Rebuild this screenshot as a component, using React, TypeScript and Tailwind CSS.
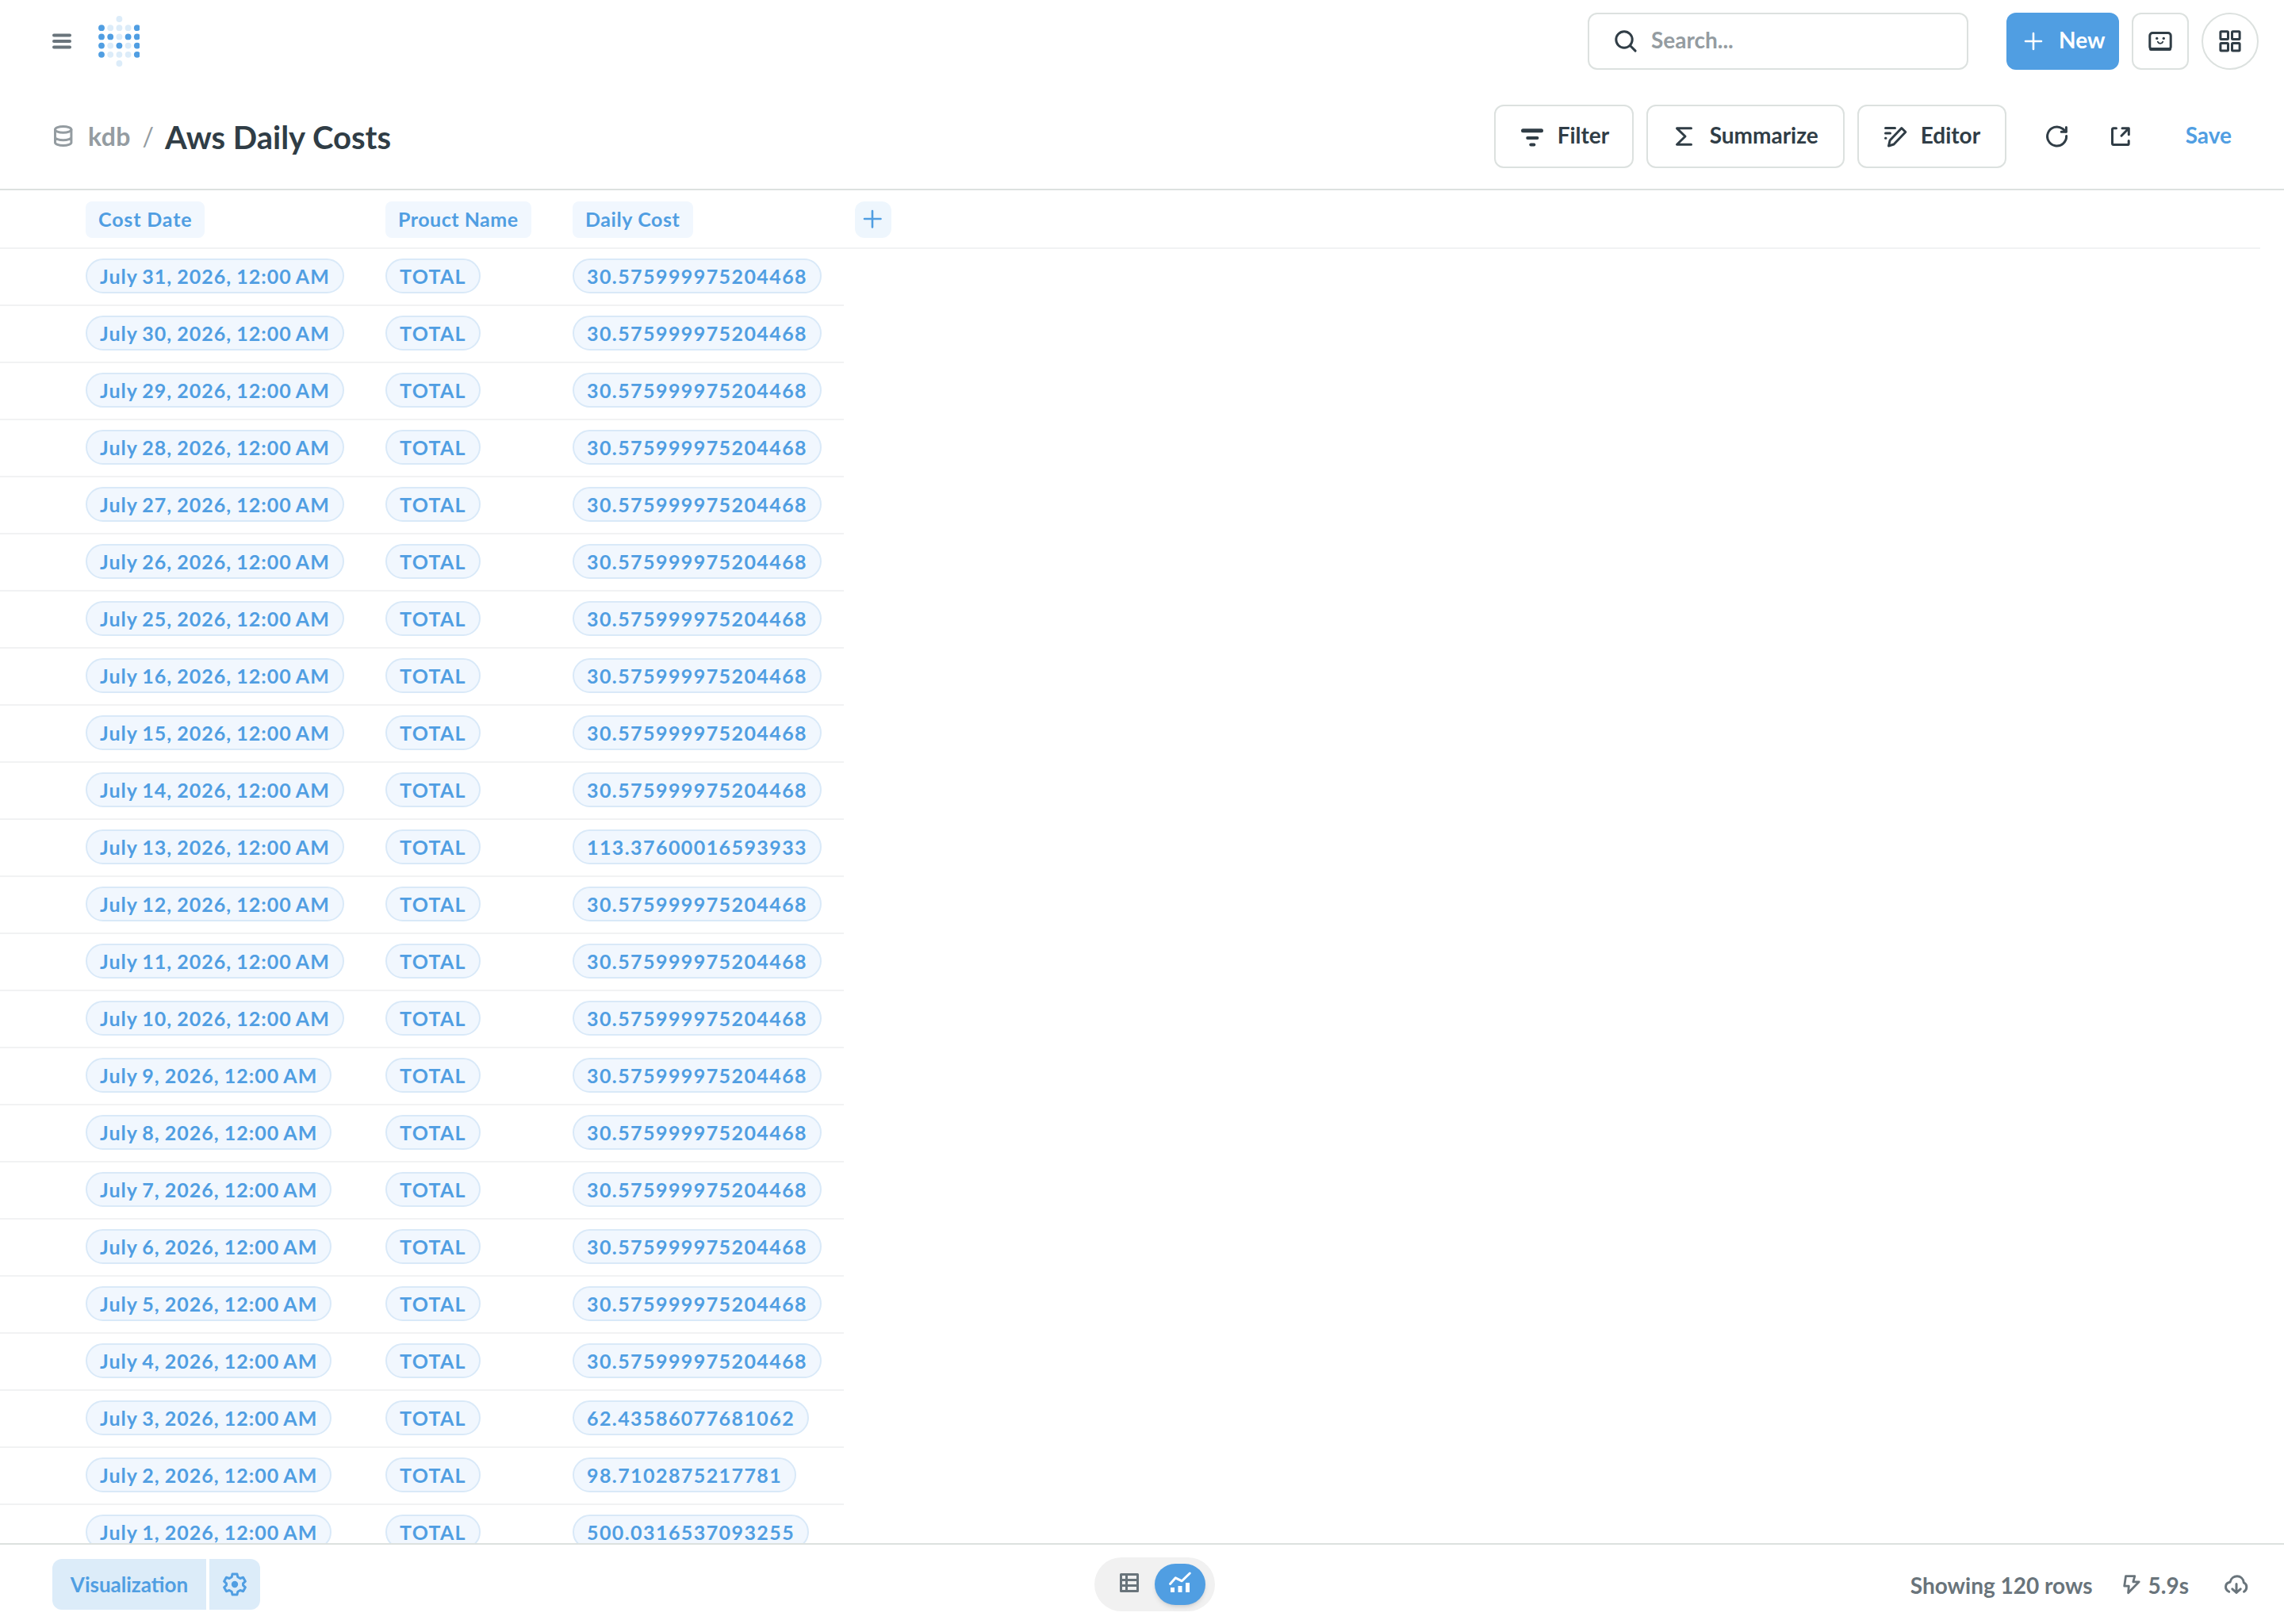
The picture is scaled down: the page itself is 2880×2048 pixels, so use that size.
import React from 'react';

interface CostRow {
  date: string;
  product: string;
  cost: string;
}

const USUAL_COST = '30.575999975204468';

// Days whose cost differs from the usual one
const COST_BY_DAY: Record<number, string> = {
  13: '113.37600016593933',
  3: '62.43586077681062',
  2: '98.7102875217781',
  1: '500.0316537093255',
};

const DAYS = [31, 30, 29, 28, 27, 26, 25, 16, 15, 14, 13, 12, 11, 10, 9, 8, 7, 6, 5, 4, 3, 2, 1];

const ROWS: CostRow[] = DAYS.map(day => ({
  date: `July ${day}, 2026, 12:00 AM`,
  product: 'TOTAL',
  cost: COST_BY_DAY[day] ?? USUAL_COST,
}));

const LOGO_ROWS = ['..o..', 'xooox', 'xxoxx', 'xoxox', 'xooox', '..o..'];

const Logo: React.FC = () => (
  <svg className="h-[68px] w-[52px]" viewBox="0 0 52 68">
    {LOGO_ROWS.map((row, y) =>
      row.split('').map((dot, x) =>
        dot === '.' ? null : (
          <circle
            key={`${x}-${y}`}
            cx={4 + x * 11.2}
            cy={6 + y * 11.2}
            r={3.9}
            fill={dot === 'x' ? '#509ee2' : '#dcecf9'}
          />
        )
      )
    )}
  </svg>
);

interface IconProps {
  className?: string;
  children: React.ReactNode;
}

const Icon: React.FC<IconProps> = ({ className = '', children }) => (
  <svg
    className={`size-8 shrink-0 ${className}`}
    viewBox="0 0 32 32"
    fill="none"
    stroke="currentColor"
    strokeWidth={3}
    strokeLinecap="round"
    strokeLinejoin="round"
  >
    {children}
  </svg>
);

const TopBar: React.FC = () => (
  <nav className="flex h-[104px] items-center pr-8 pl-[62px]">
    <Icon className="text-[#69747b]">
      <path d="M6 8.5h20M6 16h20M6 23.5h20" strokeWidth={4} />
    </Icon>
    <div className="ml-[30px]">
      <Logo />
    </div>
    <div className="ml-auto flex h-[72px] w-[480px] items-center rounded-xl border-2 border-[#dce1df] pl-[30px]">
      <Icon>
        <circle cx="14" cy="14" r="10.2" />
        <path d="m21.5 21.5 6.6 6.6" />
      </Icon>
      <span className="ml-4 pb-[5px] text-[28px] text-[#949ca1]">Search...</span>
    </div>
    <button className="ml-12 flex h-[72px] w-[142px] items-center rounded-xl bg-[#509ee2] pl-[18px] text-[28px] text-white">
      <Icon>
        <path d="M16 6v20M6 16h20" strokeWidth={2.6} />
      </Icon>
      <span className="ml-4 pb-[5px]">New</span>
    </button>
    <button className="ml-4 flex size-[72px] items-center justify-center rounded-xl border-2 border-[#dce1df]">
      <Icon>
        <rect x="2.8" y="5.5" width="26.4" height="21" rx="3.5" />
        <path d="M4 26h24" strokeWidth={4} />
        <circle cx="11.7" cy="12.4" r="1.7" fill="currentColor" stroke="none" />
        <circle cx="20.3" cy="12.4" r="1.7" fill="currentColor" stroke="none" />
        <path d="M12.8 16.6c1.2 2.9 5.2 2.9 6.4 0" strokeWidth={1.8} />
      </Icon>
    </button>
    <button className="ml-4 flex size-[72px] items-center justify-center rounded-full border-2 border-[#dce1df]">
      <Icon>
        <rect x="3.9" y="3.8" width="9.6" height="9.6" rx="1" />
        <rect x="18.5" y="3.8" width="9.6" height="9.6" rx="1" />
        <rect x="3.9" y="18.4" width="9.6" height="9.6" rx="1" />
        <rect x="18.5" y="18.4" width="9.6" height="9.6" rx="1" />
      </Icon>
    </button>
  </nav>
);

const actionClass = 'flex h-20 items-center rounded-xl border-2 border-[#dce1df] pl-[30px]';

const QuestionHeader: React.FC = () => (
  <header className="flex h-[136px] items-center border-b-2 border-[#dce1df] pt-0.5 pr-[66px] pl-16 text-[28px]">
    <Icon className="text-[#949ca1]">
      <ellipse cx="15.7" cy="7.3" rx="10.2" ry="3.9" />
      <path d="M5.5 7.5v16.3c0 2 4.6 3.8 10.2 3.8s10.2-1.8 10.2-3.8V7.5M5.5 17c0 2 4.6 3.8 10.2 3.8S25.9 19 25.9 17" />
    </Icon>
    <span className="ml-[15px] text-[32px] tracking-[0.3px] text-[#949ca1]">kdb</span>
    <span className="ml-[15px] text-[32px] font-normal text-[#949ca1]">/</span>
    <h1 className="ml-3.5 pt-0.5 text-[40px]">Aws Daily Costs</h1>
    <div className="ml-auto flex items-center gap-4">
      <button className={`${actionClass} w-44`}>
        <Icon>
          <path d="M4.5 8.8h23" strokeWidth={5} />
          <path d="M10.2 18h12.2" strokeWidth={4} />
          <path d="M14.3 26.5h4" strokeWidth={4} />
        </Icon>
        <span className="ml-4 pb-[5px]">Filter</span>
      </button>
      <button className={`${actionClass} w-[250px]`}>
        <Icon>
          <path d="M24.5 5.8H6.5L17 16 6.5 26.3h18" />
        </Icon>
        <span className="ml-4 pb-[5px]">Summarize</span>
      </button>
      <button className={`${actionClass} w-[188px]`}>
        <Icon>
          <path d="M3.5 5.5h12M3.5 12h6M3.5 18.2h.5" />
          <path d="m23.8 5.5 5 5L14 26l-6.5 2 1.6-7z" />
        </Icon>
        <span className="ml-4 pb-[5px]">Editor</span>
      </button>
    </div>
    <Icon className="ml-12">
      <path d="M27.6 15.5A12 12 0 1 1 22.6 6.2L27 10" />
      <path d="M27.4 4.5v5.7h-6.2" />
    </Icon>
    <Icon className="ml-12">
      <path d="M10.5 5.8H6.8a1.3 1.3 0 0 0-1.3 1.3v18.1a1.3 1.3 0 0 0 1.3 1.3h18.1a1.3 1.3 0 0 0 1.3-1.3V21.5" />
      <path d="M18 5.8h8.3v8M26 6 17 15.2" />
    </Icon>
    <button className="ml-[66px] pb-[5px] text-[#509ee2]">Save</button>
  </header>
);

const columnClass = ['w-[378px]', 'w-[236px]', 'w-[358px]'];
const titleClass = ['tracking-[0.85px]', 'tracking-[0.5px]', 'tracking-[0.6px]'];
const valueClass = ['tracking-[1px] [word-spacing:-1px]', 'tracking-[1.25px]', 'tracking-[1.42px]'];

const ResultsTable: React.FC = () => (
  <main className="min-h-0 flex-1 overflow-hidden text-[25px] text-[#509ee2]">
    <div className="mr-[30px] flex h-[74px] items-center border-b-2 border-[#f1f2f3] pt-0.5 pl-[92px]">
      {['Cost Date', 'Prouct Name', 'Daily Cost'].map((title, index) => (
        <div key={title} className={`flex pl-4 ${columnClass[index]}`}>
          <span className={`flex h-[46px] items-center rounded-lg bg-[#f1f7fe] px-4 ${titleClass[index]}`}>
            {title}
          </span>
        </div>
      ))}
      <button className="ml-3.5 flex h-[46px] w-[46px] items-center justify-center rounded-xl bg-[#eef6fd]">
        <Icon>
          <path d="M15 5v20.5M5 15h20.5" strokeWidth={2.6} />
        </Icon>
      </button>
    </div>
    {ROWS.map(row => (
      <div key={row.date} className="flex h-[72px] w-[1064px] items-start border-b-2 border-[#f1f2f3] pt-3 pl-[92px]">
        {[row.date, row.product, row.cost].map((value, index) => (
          <div key={index} className={`flex pl-4 ${columnClass[index]}`}>
            <span
              className={`flex h-11 items-center rounded-full border-2 border-[#d9e9f8] bg-[#f1f7fe] px-4 pt-0.5 whitespace-nowrap ${valueClass[index]}`}
            >
              {value}
            </span>
          </div>
        ))}
      </div>
    ))}
  </main>
);

const Footer: React.FC = () => (
  <footer className="flex h-[102px] items-center justify-between border-t-2 border-[#dce1df] pr-11 pl-[66px] text-[28px] text-[#69747b]">
    <div className="flex w-[1314px] gap-1 text-[26px] text-[#509ee2]">
      <button className="h-16 w-[194px] rounded-l-xl bg-[#dcecf9]">Visualization</button>
      <button className="flex h-16 w-16 items-center justify-center rounded-r-xl bg-[#dcecf9]">
        <Icon>
          <path d="M13 3h6l.8 3.8 3 1.7 3.8-1.2 2.8 4.9-2.9 2.7v2.2l2.9 2.7-2.8 4.9-3.8-1.2-3 1.7L19 29h-6l-.8-3.8-3-1.7-3.8 1.2-2.8-4.9 2.9-2.7v-2.2l-2.9-2.7 2.8-4.9 3.8 1.2 3-1.7z" />
          <circle cx="16" cy="16" r="4.2" fill="currentColor" stroke="none" />
        </Icon>
      </button>
    </div>
    <div className="flex h-[68px] w-[152px] items-center rounded-full bg-[#f1f1f1] px-3">
      <div className="flex w-16 justify-center pb-1">
        <Icon>
          <path d="M5.5 5.5h21v21h-21zM12.5 5.5v21M6 12.5h20M6 19.5h20" />
        </Icon>
      </div>
      <div className="flex h-[52px] w-16 items-center justify-center rounded-full bg-[#509ee2] pb-1 text-white shadow-md">
        <Icon>
          <path d="m3.5 17.5 6.8-7.7 8 4L28.3 4" />
          <path d="M6.5 28v-6M16 28v-8M25.5 28V16" strokeWidth={5} strokeLinecap="butt" />
        </Icon>
      </div>
    </div>
    <div className="flex w-[1304px] items-center justify-end">
      <span className="pt-0.5">Showing 120 rows</span>
      <Icon className="ml-8">
        <path d="M9.5 5.7h11.3l-2 7.1h7.4L12.6 26.8l.7-8.6H7.7z" strokeWidth={2.8} />
      </Icon>
      <span className="ml-1.5 pt-0.5">5.9s</span>
      <Icon className="ml-11">
        <path d="M6.7 25.3C.5 22 1.5 14 8 13.3 10 3.5 24 3 25.3 13.8c4.8 2 4.5 9 .2 11.5" />
        <path d="M16 15.5v11M10.8 21.8l5.2 4.7 5.2-4.7" />
      </Icon>
    </div>
  </footer>
);

const App: React.FC = () => (
  <div className="flex h-[2048px] w-[2880px] flex-col overflow-hidden bg-white font-['Lato',sans-serif] font-bold text-[#303d46]">
    <TopBar />
    <QuestionHeader />
    <ResultsTable />
    <Footer />
  </div>
);

export default App;
